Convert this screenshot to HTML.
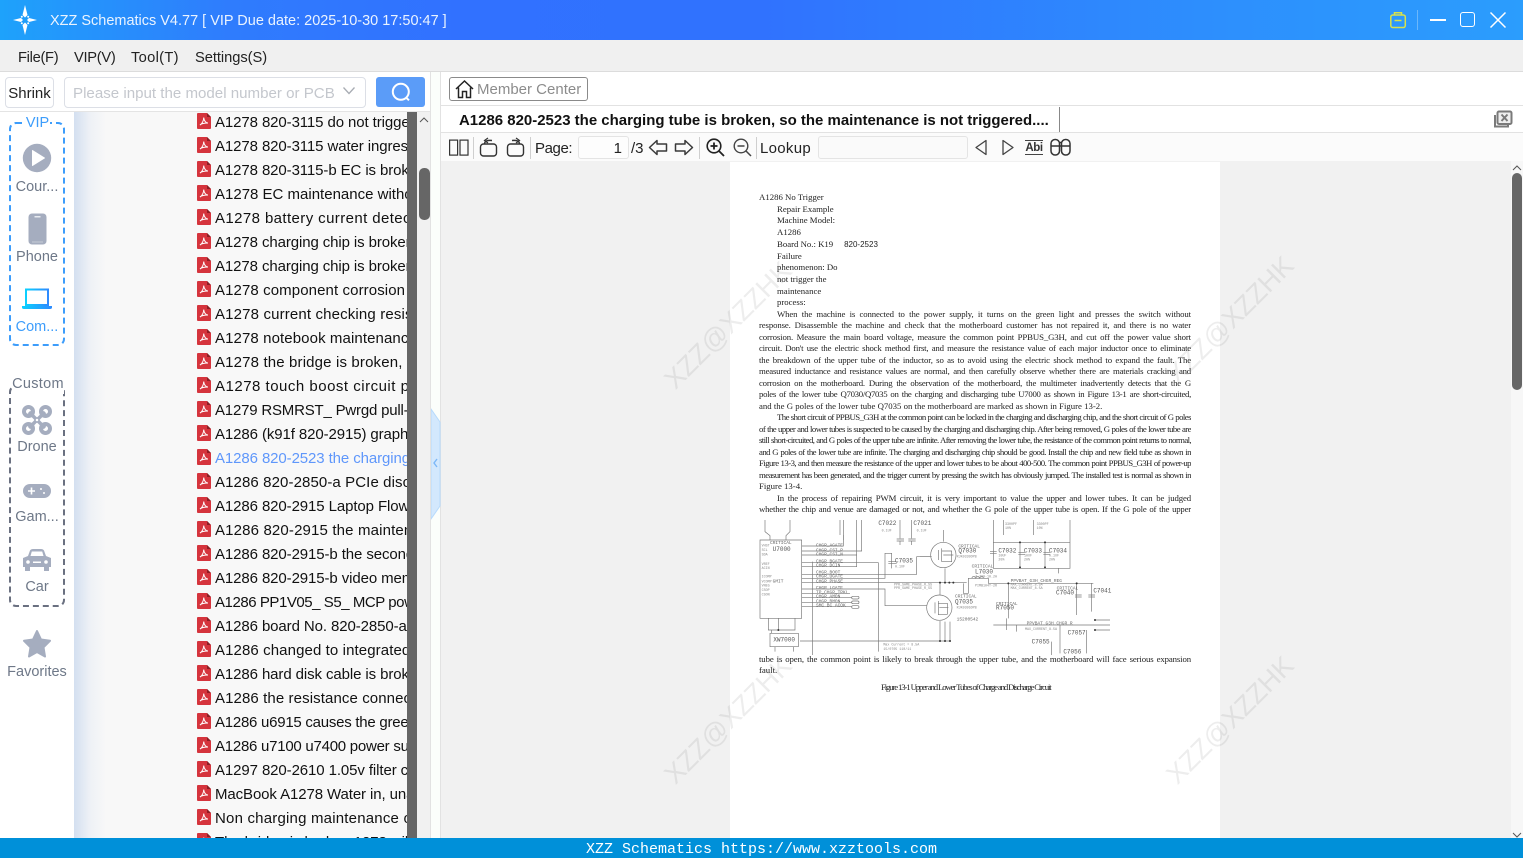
<!DOCTYPE html>
<html><head><meta charset="utf-8"><title>XZZ Schematics</title>
<style>
html,body{margin:0;padding:0;width:1523px;height:858px;overflow:hidden;background:#fff;font-family:"Liberation Sans","Noto Sans CJK SC",sans-serif;color:#111}
.a{position:absolute}
#top{left:0;top:0;width:1523px;height:40px;background:linear-gradient(90deg,#1ea2fb 0,#2f7cfd 15%,#3171ff 30%,#3072fe 50%,#2d8ffd 80%,#2b9dfd 100%)}
#menu{left:0;top:40px;width:1523px;height:31px;background:#f0f0f0;border-bottom:1px solid #dcdcdc}
.m{position:absolute;top:8px;font-size:14.7px;line-height:20px;color:#222}
#leftbg{left:74px;top:112px;width:333px;height:726px;background:linear-gradient(90deg,#d3dff0 0,#eef1f6 16px,#f8f8f8 32px)}
#list{left:74px;top:112px;width:333px;height:726px;overflow:hidden}
#list div{position:absolute;left:141px;width:192px;height:24px;line-height:24px;font-size:15px;letter-spacing:-.1px;white-space:nowrap;overflow:hidden;color:#111}
.pi{position:absolute;left:197px;width:14px;height:16px}
.lab{position:absolute;left:0;width:74px;text-align:center;font-size:14.5px;line-height:20px;color:#6e7888}
.p{position:absolute;left:759px;width:432px;height:12px;line-height:12px;font-family:"Liberation Serif",serif;font-size:8.75px;letter-spacing:-.12px;color:#222;text-align:justify;text-align-last:justify;overflow:hidden;white-space:nowrap;filter:blur(.25px)}
.i{left:777px;width:414px}
.l{text-align:left;text-align-last:left;letter-spacing:0}
.t{letter-spacing:-.55px}
.wm{position:absolute;font-size:27px;line-height:40px;width:190px;text-align:center;color:rgba(110,110,110,.12);transform:rotate(-45deg);white-space:nowrap}
.sep{position:absolute;top:137px;width:1px;height:22px;background:#cfcfcf}
.tx{position:absolute;font-size:15px;line-height:22px;color:#222;white-space:nowrap}
</style></head><body>
<svg width="0" height="0" style="position:absolute"><defs><symbol id="pdf" viewBox="0 0 14 16"><path d="M1 0H10L14 4V15Q14 16 13 16H1Q0 16 0 15V1Q0 0 1 0Z" fill="#d5343d"/><path d="M10 0L14 4H10Z" fill="#8c1f25"/><path d="M3 12C5 11 7 7 6.700 4.500C7 8 9 10 11 10C9 10 5 10 3 12Z" fill="none" stroke="#fff" stroke-width="1"/></symbol></defs></svg>

<div class="a" id="top"></div>
<svg class="a" style="left:11px;top:5px" width="28" height="30" viewBox="0 0 28 30"><path d="M14 0L16.500 10L14 12.500L11.500 10ZM14 30L16.500 20L14 17.500L11.500 20ZM2 15L10 13L12 15L10 17ZM26 15L18 13L16 15L18 17Z" fill="#fff"/><circle cx="10.800" cy="11.800" r="1" fill="#fff"/><circle cx="17.200" cy="11.800" r="1" fill="#fff"/><circle cx="10.800" cy="18.200" r="1" fill="#fff"/><circle cx="17.200" cy="18.200" r="1" fill="#fff"/></svg>
<div class="a" style="left:50px;top:11px;font-size:14.49px;line-height:20px;color:#eaf3ff;white-space:nowrap">XZZ Schematics V4.77 [ VIP Due date: 2025-10-30 17:50:47 ]</div>
<svg class="a" style="left:1388px;top:10px" width="20" height="20" viewBox="0 0 20 20" fill="none" stroke="#d7e24c" stroke-width="1.500"><rect x="2.800" y="5" width="14.500" height="12.500" rx="2"/><path d="M6.500 5V2.800H13.500V5M6.500 10.500H13.500"/></svg>
<div class="a" style="left:1417px;top:10px;width:1px;height:20px;background:#6bb7fb"></div>
<div class="a" style="left:1430px;top:19px;width:16px;height:2px;background:#fff"></div>
<div class="a" style="left:1460px;top:12px;width:13px;height:13px;border:1.500px solid #fff;border-radius:3px"></div>
<svg class="a" style="left:1489px;top:11px" width="18" height="18" viewBox="0 0 18 18"><path d="M1.500 1.500L16.500 16.500M16.500 1.500L1.500 16.500" stroke="#fff" stroke-width="1.500"/></svg>

<div class="a" id="menu">
<span class="m" style="left:18px;letter-spacing:-.3px">File(F)</span><span class="m" style="left:74px;letter-spacing:-.3px">VIP(V)</span><span class="m" style="left:131px;letter-spacing:.3px">Tool(T)</span><span class="m" style="left:195px;letter-spacing:-.05px">Settings(S)</span>
</div>

<!-- search row -->
<div class="a" style="left:0;top:72px;width:430px;height:39px;background:#fff;border-bottom:1px solid #e4e4e4"></div>
<div class="a" style="left:5px;top:77px;width:47px;height:29px;border:1px solid #dcdfe6;border-radius:4px;text-align:center;font-size:15px;line-height:31px;color:#222">Shrink</div>
<div class="a" style="left:64px;top:77px;width:300px;height:29px;border:1px solid #dcdfe6;border-radius:4px;font-size:15.1px;line-height:31px;color:#c4c7cd;text-indent:8px;white-space:nowrap;overflow:hidden">Please input the model number or PCB</div>
<svg class="a" style="left:342px;top:86px" width="14" height="10" viewBox="0 0 14 10"><path d="M1.500 1.500L7 7.500L12.500 1.500" fill="none" stroke="#a8acb3" stroke-width="1.300"/></svg>
<div class="a" style="left:376px;top:77px;width:49px;height:30px;background:#5b9cf8;border-radius:3px"></div>
<svg class="a" style="left:389px;top:80px" width="24" height="24" viewBox="0 0 24 24" fill="none" stroke="#fff" stroke-width="2"><circle cx="11.800" cy="11.800" r="8"/><path d="M17.500 18L20 20.300"/></svg>

<!-- left rail -->
<div class="a" style="left:0;top:112px;width:74px;height:726px;background:#fff"></div>
<div class="a" style="left:9px;top:122px;width:52px;height:220px;border:2px dashed #3d9dfb;border-radius:7px"></div>
<div class="a" style="left:25px;top:113px;width:25px;height:20px;background:#fff;text-align:center;font-size:14.5px;line-height:20px;color:#3d9dfb">VIP</div>
<svg class="a" style="left:22px;top:143px" width="30" height="30" viewBox="0 0 30 30"><circle cx="15" cy="15" r="14.200" fill="#a5adbf"/><path d="M10.500 7.500L22.500 15L10.500 22.500Z" fill="#fff" stroke="#fff" stroke-width="1" stroke-linejoin="round"/></svg>
<div class="lab" style="top:177px">Cour...</div>
<svg class="a" style="left:28px;top:213px" width="19" height="32" viewBox="0 0 19 32"><rect x=".500" y=".500" width="18" height="31" rx="3.500" fill="#a5adbf"/><rect x="6.500" y="3" width="6" height="1.500" fill="#e8ebf0"/><rect x="4" y="28.500" width="11" height="1" fill="#c8cdd7"/></svg>
<div class="lab" style="top:247px">Phone</div>
<svg class="a" style="left:22px;top:288px" width="30" height="22" viewBox="0 0 30 22"><defs><linearGradient id="lg" x1="0" x2="1"><stop offset="0" stop-color="#0bd0ff"/><stop offset="1" stop-color="#2e8bff"/></linearGradient></defs><path d="M4 1.500H26V17H4Z" fill="#fff" stroke="url(#lg)" stroke-width="2"/><path d="M0 18H30V19.500Q30 21 28 21H2Q0 21 0 19.500Z" fill="url(#lg)"/></svg>
<div class="lab" style="top:317px;color:#3d9dfb">Com...</div>

<div class="a" style="left:9px;top:385px;width:52px;height:218px;border:2px dashed #6a7080;border-radius:7px"></div>
<div class="a" style="left:12px;top:374px;width:52px;height:20px;background:#fff;text-align:center;font-size:14.5px;line-height:20px;letter-spacing:.3px;color:#6e7888">Custom</div>
<svg class="a" style="left:22px;top:405px" width="30" height="30" viewBox="0 0 30 30" fill="none" stroke="#a5adbf"><circle cx="6.500" cy="6.500" r="4.500" stroke-width="4"/><circle cx="23.500" cy="6.500" r="4.500" stroke-width="4"/><circle cx="6.500" cy="23.500" r="4.500" stroke-width="4"/><circle cx="23.500" cy="23.500" r="4.500" stroke-width="4"/><path d="M7 7L23 23M23 7L7 23" stroke-width="3.500"/><circle cx="15" cy="15" r="2" fill="#fff" stroke-width="1.500"/></svg>
<div class="lab" style="top:437px">Drone</div>
<svg class="a" style="left:23px;top:484px" width="28" height="14" viewBox="0 0 28 14"><rect width="28" height="14" rx="7" fill="#a5adbf"/><path d="M5 7H12M8.500 3.500V10.500" stroke="#fff" stroke-width="1.600"/><circle cx="18" cy="5" r="1" fill="#fff"/><circle cx="21" cy="9" r="1" fill="#fff"/></svg>
<div class="lab" style="top:507px">Gam...</div>
<svg class="a" style="left:23px;top:548px" width="28" height="24" viewBox="0 0 28 24"><path d="M5 8L7 2.500Q8 1 10 1H18Q20 1 21 2.500L23 8L28 10V19H26V23H21V19H7V23H2V19H0V10Z" fill="#a5adbf"/><path d="M7.500 8L8.800 3.500H19.200L20.500 8Z" fill="#fff"/><circle cx="5" cy="14" r="1.800" fill="#fff"/><circle cx="23" cy="14" r="1.800" fill="#fff"/><rect x="10" y="13.500" width="8" height="1.500" fill="#fff"/></svg>
<div class="lab" style="top:577px">Car</div>
<svg class="a" style="left:22px;top:629px" width="30" height="29" viewBox="0 0 30 29"><path d="M15 2L19 10.500L28 11.800L21.500 18.300L23 27.500L15 23L7 27.500L8.500 18.300L2 11.800L11 10.500Z" fill="#a5adbf" stroke="#a5adbf" stroke-width="2" stroke-linejoin="round"/></svg>
<div class="lab" style="top:662px;left:0">Favorites</div>

<!-- list -->
<div class="a" id="leftbg"></div>
<div class="a" id="list">
<div style="top:-1px">A1278 820-3115 do not trigger</div>
<div style="top:23px">A1278 820-3115 water ingress</div>
<div style="top:47px">A1278 820-3115-b EC is broken</div>
<div style="top:71px;letter-spacing:0">A1278 EC maintenance without</div>
<div style="top:95px;letter-spacing:.4px">A1278 battery current detection</div>
<div style="top:119px">A1278 charging chip is broken</div>
<div style="top:143px">A1278 charging chip is broken</div>
<div style="top:167px;letter-spacing:.1px">A1278 component corrosion</div>
<div style="top:191px;letter-spacing:.15px">A1278 current checking resistance</div>
<div style="top:215px;letter-spacing:.1px">A1278 notebook maintenance</div>
<div style="top:239px;letter-spacing:.15px">A1278 the bridge is broken, no</div>
<div style="top:263px;letter-spacing:.5px">A1278 touch boost circuit problem</div>
<div style="top:287px;letter-spacing:-.2px">A1279 RSMRST_ Pwrgd pull-up</div>
<div style="top:311px">A1286 (k91f 820-2915) graphics</div>
<div style="top:335px;color:#5f97fb">A1286 820-2523 the charging tube</div>
<div style="top:359px;letter-spacing:.1px">A1286 820-2850-a PCIe discrete</div>
<div style="top:383px">A1286 820-2915 Laptop Flowing</div>
<div style="top:407px;letter-spacing:.15px">A1286 820-2915 the maintenance</div>
<div style="top:431px">A1286 820-2915-b the second</div>
<div style="top:455px">A1286 820-2915-b video memory</div>
<div style="top:479px;letter-spacing:-.45px">A1286 PP1V05_ S5_ MCP power</div>
<div style="top:503px">A1286 board No. 820-2850-a</div>
<div style="top:527px;letter-spacing:.1px">A1286 changed to integrated</div>
<div style="top:551px">A1286 hard disk cable is broken</div>
<div style="top:575px;letter-spacing:.1px">A1286 the resistance connection</div>
<div style="top:599px;letter-spacing:-.25px">A1286 u6915 causes the green</div>
<div style="top:623px;letter-spacing:-.25px">A1286 u7100 u7400 power supply</div>
<div style="top:647px">A1297 820-2610 1.05v filter cap</div>
<div style="top:671px">MacBook A1278 Water in, unable</div>
<div style="top:695px;letter-spacing:.2px">Non charging maintenance of</div>
<div style="top:719px">The bridge is broken 1278 will</div>
<svg class="pi" style="left:123px;top:1px"><use href="#pdf"/></svg>
<svg class="pi" style="left:123px;top:25px"><use href="#pdf"/></svg>
<svg class="pi" style="left:123px;top:49px"><use href="#pdf"/></svg>
<svg class="pi" style="left:123px;top:73px"><use href="#pdf"/></svg>
<svg class="pi" style="left:123px;top:97px"><use href="#pdf"/></svg>
<svg class="pi" style="left:123px;top:121px"><use href="#pdf"/></svg>
<svg class="pi" style="left:123px;top:145px"><use href="#pdf"/></svg>
<svg class="pi" style="left:123px;top:169px"><use href="#pdf"/></svg>
<svg class="pi" style="left:123px;top:193px"><use href="#pdf"/></svg>
<svg class="pi" style="left:123px;top:217px"><use href="#pdf"/></svg>
<svg class="pi" style="left:123px;top:241px"><use href="#pdf"/></svg>
<svg class="pi" style="left:123px;top:265px"><use href="#pdf"/></svg>
<svg class="pi" style="left:123px;top:289px"><use href="#pdf"/></svg>
<svg class="pi" style="left:123px;top:313px"><use href="#pdf"/></svg>
<svg class="pi" style="left:123px;top:337px"><use href="#pdf"/></svg>
<svg class="pi" style="left:123px;top:361px"><use href="#pdf"/></svg>
<svg class="pi" style="left:123px;top:385px"><use href="#pdf"/></svg>
<svg class="pi" style="left:123px;top:409px"><use href="#pdf"/></svg>
<svg class="pi" style="left:123px;top:433px"><use href="#pdf"/></svg>
<svg class="pi" style="left:123px;top:457px"><use href="#pdf"/></svg>
<svg class="pi" style="left:123px;top:481px"><use href="#pdf"/></svg>
<svg class="pi" style="left:123px;top:505px"><use href="#pdf"/></svg>
<svg class="pi" style="left:123px;top:529px"><use href="#pdf"/></svg>
<svg class="pi" style="left:123px;top:553px"><use href="#pdf"/></svg>
<svg class="pi" style="left:123px;top:577px"><use href="#pdf"/></svg>
<svg class="pi" style="left:123px;top:601px"><use href="#pdf"/></svg>
<svg class="pi" style="left:123px;top:625px"><use href="#pdf"/></svg>
<svg class="pi" style="left:123px;top:649px"><use href="#pdf"/></svg>
<svg class="pi" style="left:123px;top:673px"><use href="#pdf"/></svg>
<svg class="pi" style="left:123px;top:697px"><use href="#pdf"/></svg>
<svg class="pi" style="left:123px;top:721px"><use href="#pdf"/></svg>
</div>
<!-- list scrollbars -->
<div class="a" style="left:407px;top:112px;width:10px;height:726px;background:#666"></div>
<div class="a" style="left:417px;top:112px;width:13px;height:726px;background:#f1f1f1"></div>
<svg class="a" style="left:419px;top:116px" width="10" height="8" viewBox="0 0 10 8"><path d="M1 6L5 2L9 6" fill="none" stroke="#555" stroke-width="1"/></svg>
<div class="a" style="left:419px;top:168px;width:11px;height:52px;background:#666;border-radius:5px"></div>
<!-- splitter -->
<div class="a" style="left:430px;top:72px;width:9px;height:766px;background:#fbfefb;border-left:1px solid #e2e2e2;border-right:1px solid #e2e2e2"></div>
<svg class="a" style="left:431px;top:408px" width="10" height="112" viewBox="0 0 10 112"><path d="M0 1L9 14V98L0 111Z" fill="#d3e8fd" stroke="#b7dafc" stroke-width="1"/><path d="M6 51L3 55L6 59" fill="none" stroke="#7cb8f8" stroke-width="1.400"/></svg>

<!-- right top -->
<div class="a" style="left:441px;top:72px;width:1082px;height:33px;background:#fff;border-bottom:1px solid #e2e2e2"></div>
<div class="a" style="left:449px;top:77px;width:137px;height:22px;border:1px solid #8a8a8a;border-radius:3px"></div>
<svg class="a" style="left:455px;top:79px" width="19" height="20" viewBox="0 0 19 20" fill="none" stroke="#222" stroke-width="1.500"><path d="M1 10L9.500 2L18 10M3.500 8.500V18.500H7.500V12.500H11.500V18.500H15.500V8.500"/></svg>
<div class="tx" style="left:477px;top:79px;color:#8c8c8c">Member Center</div>
<div class="a" style="left:441px;top:106px;width:1082px;height:26px;background:#fff;border-bottom:1px solid #e2e2e2"></div>
<div class="a" style="left:459px;top:111px;font-size:14.97px;line-height:20px;font-weight:bold;color:#111;white-space:nowrap">A1286 820-2523 the charging tube is broken, so the maintenance is not triggered....</div>
<div class="a" style="left:1059px;top:107px;width:1px;height:25px;background:#888"></div>
<svg class="a" style="left:1493px;top:110px" width="20" height="18" viewBox="0 0 20 18" fill="none" stroke="#7a7a7a" stroke-width="2"><path d="M2 5V16.500H15V14"/><rect x="4.500" y="1.500" width="14" height="12.500" rx="1.500" fill="#eee"/><path d="M8.500 4.500L14.500 11M14.500 4.500L8.500 11"/></svg>

<!-- toolbar -->
<div class="a" style="left:441px;top:133px;width:1082px;height:28px;background:#fbfbfb"></div>
<svg class="a" style="left:449px;top:139px" width="20" height="17" viewBox="0 0 20 17" fill="none" stroke="#333" stroke-width="1.200"><rect x=".600" y="1.100" width="8" height="15"/><rect x="11" y="1.100" width="8" height="15"/></svg>
<div class="sep" style="left:473px"></div>
<svg class="a" style="left:479px;top:137px" width="20" height="20" viewBox="0 0 20 20" fill="none" stroke="#333" stroke-width="1.400"><rect x="1.500" y="7" width="16" height="12" rx="3"/><path d="M5.500 7C5.500 4 8.500 3 13 3.500"/><path d="M9 1L5.500 3.500L9 6" stroke-width="1.200"/></svg>
<svg class="a" style="left:505px;top:137px" width="20" height="20" viewBox="0 0 20 20" fill="none" stroke="#333" stroke-width="1.400"><rect x="2.500" y="7" width="16" height="12" rx="3"/><path d="M14.500 7C14.500 4 11.500 3 7 3.500"/><path d="M11 1L14.500 3.500L11 6" stroke-width="1.200"/></svg>
<div class="sep" style="left:530px"></div>
<div class="tx" style="left:535px;top:138px;letter-spacing:-.4px">Page:</div>
<div class="a" style="left:578px;top:136px;width:49px;height:21px;border:1px solid #e4e4e4;border-radius:3px;background:#fdfdfd;font-size:15px;line-height:23px;text-align:right;color:#222"><span style="padding-right:6px">1</span></div>
<div class="tx" style="left:631px;top:138px">/3</div>
<svg class="a" style="left:648px;top:138px" width="20" height="19" viewBox="0 0 20 19"><path d="M1.500 9.500L9 2.500V6H18.500V13H9V16.500Z" fill="none" stroke="#3a3a3a" stroke-width="1.500" stroke-linejoin="round"/></svg>
<svg class="a" style="left:674px;top:138px" width="20" height="19" viewBox="0 0 20 19"><path d="M18.500 9.500L11 2.500V6H1.500V13H11V16.500Z" fill="none" stroke="#3a3a3a" stroke-width="1.500" stroke-linejoin="round"/></svg>
<div class="sep" style="left:699px"></div>
<svg class="a" style="left:706px;top:138px" width="19" height="19" viewBox="0 0 19 19" fill="none" stroke="#222" stroke-width="1.600"><circle cx="8" cy="8" r="6.800"/><path d="M13 13L18 18M4.500 8H11.500M8 4.500V11.500" stroke-width="1.800"/></svg>
<svg class="a" style="left:733px;top:138px" width="19" height="19" viewBox="0 0 19 19" fill="none" stroke="#444" stroke-width="1.400"><circle cx="8" cy="8" r="6.800"/><path d="M13 13L18 18M4.500 8H11.500" stroke-width="1.500"/></svg>
<div class="sep" style="left:756px"></div>
<div class="tx" style="left:760px;top:138px;letter-spacing:.3px">Lookup</div>
<div class="a" style="left:818px;top:136px;width:148px;height:21px;border:1px solid #e4e4e4;border-radius:3px;background:#fafafa"></div>
<svg class="a" style="left:974px;top:139px" width="14" height="17" viewBox="0 0 14 17"><path d="M2 8.500L12 1.500V15.500Z" fill="none" stroke="#444" stroke-width="1.300" stroke-linejoin="round"/></svg>
<svg class="a" style="left:1001px;top:139px" width="14" height="17" viewBox="0 0 14 17"><path d="M12 8.500L2 1.500V15.500Z" fill="none" stroke="#444" stroke-width="1.300" stroke-linejoin="round"/></svg>
<div class="a" style="left:1025px;top:140px;width:18px;height:13px;border-top:1px solid #444;border-bottom:1px solid #444;font-size:11.5px;line-height:14px;font-weight:bold;color:#333;text-align:center;letter-spacing:-.4px">Abi</div>
<svg class="a" style="left:1050px;top:138px" width="21" height="18" viewBox="0 0 21 18" fill="none" stroke="#333" stroke-width="1.500"><rect x="1" y="1.500" width="8.500" height="15.500" rx="4"/><rect x="11.500" y="1.500" width="8.500" height="15.500" rx="4"/><path d="M1 8H20M9.500 4.500H11.500"/></svg>

<!-- doc area -->
<div class="a" style="left:441px;top:161px;width:1070px;height:677px;background:#f1f1f1"></div>
<div class="a" style="left:730px;top:162px;width:490px;height:676px;background:#fff"></div>
<div class="a" style="left:1511px;top:161px;width:12px;height:677px;background:#f7f7f7"></div>
<svg class="a" style="left:1512px;top:164px" width="10" height="8" viewBox="0 0 10 8"><path d="M1 6L5 2L9 6" fill="none" stroke="#555" stroke-width="1"/></svg>
<svg class="a" style="left:1512px;top:832px" width="10" height="6" viewBox="0 0 10 6"><path d="M1 1L5 5L9 1" fill="none" stroke="#555" stroke-width="1"/></svg>
<div class="a" style="left:1512px;top:173px;width:10px;height:217px;background:#666;border-radius:5px"></div>

<!-- pdf text -->
<div class="p l" style="top:191px">A1286 No Trigger</div>
<div class="p i l" style="top:203px">Repair Example</div>
<div class="p i l" style="top:214px">Machine Model:</div>
<div class="p i l" style="top:226px">A1286</div>
<div class="p i l" style="top:238px;white-space:pre">Board No.: K19     <span style="font-family:'Liberation Sans',sans-serif;font-size:8px">820-2523</span></div>
<div class="p i l" style="top:250px">Failure</div>
<div class="p i l" style="top:261px">phenomenon: Do</div>
<div class="p i l" style="top:273px">not trigger the</div>
<div class="p i l" style="top:285px">maintenance</div>
<div class="p i l" style="top:296px">process:</div>
<div class="p i" style="top:308px">When the machine is connected to the power supply, it turns on the green light and presses the switch without</div>
<div class="p" style="top:319px">response. Disassemble the machine and check that the motherboard customer has not repaired it, and there is no water</div>
<div class="p" style="top:331px">corrosion. Measure the main board voltage, measure the common point PPBUS_G3H, and cut off the power value short</div>
<div class="p" style="top:342px;letter-spacing:-.2px">circuit. Don't use the electric shock method first, and measure the resistance value of each major inductor once to eliminate</div>
<div class="p" style="top:354px">the breakdown of the upper tube of the inductor, so as to avoid using the electric shock method to expand the fault. The</div>
<div class="p" style="top:365px;letter-spacing:-.2px">measured inductance and resistance values are normal, and then carefully observe whether there are materials cracking and</div>
<div class="p" style="top:377px;letter-spacing:-.2px">corrosion on the motherboard. During the observation of the motherboard, the multimeter inadvertently detects that the G</div>
<div class="p" style="top:388px;letter-spacing:-.3px">poles of the lower tube Q7030/Q7035 on the charging and discharging tube U7000 as shown in Figure 13-1 are short-circuited,</div>
<div class="p l" style="top:400px">and the G poles of the lower tube Q7035 on the motherboard are marked as shown in Figure 13-2.</div>
<div class="p i t" style="top:411px">The short circuit of PPBUS_G3H at the common point can be locked in the charging and discharging chip, and the short circuit of G poles</div>
<div class="p t" style="top:423px">of the upper and lower tubes is suspected to be caused by the charging and discharging chip. After being removed, G poles of the lower tube are</div>
<div class="p t" style="top:434px;letter-spacing:-.62px">still short-circuited, and G poles of the upper tube are infinite. After removing the lower tube, the resistance of the common point returns to normal,</div>
<div class="p t" style="top:446px">and G poles of the lower tube are infinite. The charging and discharging chip should be good. Install the chip and new field tube as shown in</div>
<div class="p t" style="top:457px">Figure 13-3, and then measure the resistance of the upper and lower tubes to be about 400-500. The common point PPBUS_G3H of power-up</div>
<div class="p t" style="top:469px">measurement has been generated, and the trigger current by pressing the switch has obviously jumped. The installed test is normal as shown in</div>
<div class="p l" style="top:480px">Figure 13-4.</div>
<div class="p i" style="top:492px">In the process of repairing PWM circuit, it is very important to value the upper and lower tubes. It can be judged</div>
<div class="p" style="top:503px;letter-spacing:-.2px">whether the chip and venue are damaged or not, and whether the G pole of the upper tube is open. If the G pole of the upper</div>
<div class="p" style="top:653px">tube is open, the common point is likely to break through the upper tube, and the motherboard will face serious expansion</div>
<div class="p l" style="top:664px">fault.</div>
<div class="p l" style="top:681px;left:881px;width:180px;letter-spacing:-1.14px">Figure 13-1 Upper and Lower Tubes of Charge and Discharge Circuit</div>

<!-- schematic -->
<svg class="a" style="left:750px;top:515px;filter:blur(.25px)" width="370" height="140" viewBox="0 0 1110 420" font-family="Liberation Mono, monospace">
<g fill="none" stroke="#777" stroke-width="2">
<path d="M30 75H155V310H30ZM45 15V50L60 62V75M120 15V50L108 62V75M55 310V345H135V310M85 310V345M60 355H145V395H60ZM75 395V410M130 395V410"/>
<path d="M155 93H280V15M155 108H335V15M155 120H320V15M155 143H385V410M155 155H320V100M155 178H500V125H540M155 190H405V115H425V160M155 203H650M155 222H405V272H530M155 235H300M155 248H305M155 262H305M155 275H305M65 345V355M188 140V420M150 378H600"/>
<circle cx="580" cy="120" r="38"/><circle cx="568" cy="278" r="38"/>
<path d="M565 105V135M575 100V140M580 120H610M575 108H605V140H575M555 262V295M565 258V300M568 278H595M565 265H592V298H565M580 80V45M585 160V205M570 240V205M570 318V378M585 320V378M600 320V378M510 125H545"/>
<path d="M450 15V70M440 72H462M440 78H462M450 78V90M485 15V70M475 72H497M475 78H497M485 78V90M270 15V60M280 60V75M415 140H440M415 146H440M730 15V160H960V15M730 82H960M810 82V160M885 82V160M775 205H1030M980 205V300M1025 205V290M730 330H1080M770 310V345M800 330V350M930 330V415M1035 315H1080M1035 345H1080M1010 345V415M905 380V420M975 240H995M975 246H995M1015 240H1035M1015 246H1035M925 160V175M720 110H740M720 116H740M805 112H825M805 118H825M880 112H900M880 118H900M760 15V60M850 15V60"/>
<path d="M640 205V235H655V190H715V205H775V310M665 190q6 -12 12 0q6 -12 12 0q6 -12 12 0"/>
<rect x="305" y="244" width="22" height="8" rx="4"/><rect x="305" y="258" width="22" height="8" rx="4"/><rect x="305" y="272" width="22" height="8" rx="4"/>
</g>
<g fill="#555" font-size="18">
<text x="385" y="30">C7022</text><text x="490" y="30">C7021</text><text x="745" y="112">C7032</text><text x="822" y="112">C7033</text><text x="897" y="112">C7034</text><text x="435" y="143">C7035</text>
<text x="675" y="175">L7030</text><text x="625" y="112">Q7030</text><text x="615" y="265">Q7035</text>
<text x="68" y="108">U7000</text><text x="70" y="380">XW7000</text><text x="918" y="238">C7040</text><text x="1030" y="233">C7041</text><text x="738" y="283">R7050</text><text x="953" y="358">C7057</text><text x="845" y="385">C7055</text><text x="940" y="415">C7056</text>
</g>
<g fill="#666" font-size="13.500">
<text x="198" y="95">CHGR_AGATE</text><text x="198" y="110">CHGR_CSI_P</text><text x="198" y="122">CHGR_CSI_N</text><text x="198" y="142">CHGR_BGATE</text><text x="198" y="155">CHGR_DCIN</text><text x="198" y="176">CHGR_BOOT</text><text x="198" y="188">CHGR_UGATE</text><text x="198" y="202">CHGR_PHASE</text><text x="198" y="222">CHGR_LGATE</text><text x="198" y="235">TP_CHGR_TRKL</text><text x="198" y="248">CHGR_AMON</text><text x="198" y="262">CHGR_BMON</text><text x="198" y="275">SMC_BC_ACOK</text><text x="782" y="201">PPVBAT_G3H_CHGR_REG</text><text x="830" y="328">PPVBAT_G3H_CHGR_R</text><text x="68" y="203">GMIT</text><text x="625" y="97">CRITICAL</text><text x="615" y="248">CRITICAL</text><text x="665" y="157">CRITICAL</text><text x="920" y="223">CRITICAL</text><text x="738" y="270">CRITICAL</text><text x="620" y="317">15200542</text><text x="60" y="87">CRITICAL</text>
</g>
<g fill="#888" font-size="10">
<text x="35" y="95">VHST</text><text x="35" y="108">SCL</text><text x="35" y="122">SDA</text><text x="35" y="150">VREF</text><text x="35" y="162">ACIN</text><text x="35" y="188">ICOMP</text><text x="35" y="202">VCOMP</text><text x="35" y="215">VNEG</text><text x="35" y="228">CSOP</text><text x="35" y="242">CSON</text>
<text x="432" y="212">PPR_SAME_PHASE_R_SS</text><text x="432" y="222">PPR_SAME_PHASE_R_SS</text><text x="782" y="212">MAX_CURRENT_8.5A</text><text x="782" y="222">MAX_CURRENT_8.5A</text><text x="825" y="345">MAX_CURRENT_8.5A</text>
<text x="620" y="128">RJK0330DPB</text><text x="620" y="280">RJK0305DPB</text><text x="675" y="214">PIMB104T-2R</text><text x="400" y="391">Max Current = 8.5A</text><text x="400" y="405">15/0705 110/11</text><text x="395" y="50">0.1UF</text><text x="500" y="50">0.1UF</text><text x="765" y="30">3300PF</text><text x="860" y="30">3300PF</text><text x="765" y="42">10%</text><text x="860" y="42">10%</text><text x="745" y="125">10UF</text><text x="822" y="125">10UF</text><text x="897" y="125">0.1UF</text><text x="745" y="137">20%</text><text x="822" y="137">20%</text><text x="897" y="137">20%</text><text x="435" y="158">0.1UF</text><text x="675" y="188">4.7UH-10.2A</text>
</g>
<g fill="#333"><circle cx="570" cy="203" r="3"/><circle cx="585" cy="203" r="3"/><circle cx="598" cy="203" r="3"/><circle cx="610" cy="203" r="3"/><circle cx="570" cy="378" r="3"/><circle cx="585" cy="378" r="3"/><circle cx="600" cy="378" r="3"/><circle cx="775" cy="205" r="3"/><circle cx="980" cy="205" r="3"/><circle cx="810" cy="82" r="3"/><circle cx="885" cy="82" r="3"/><circle cx="810" cy="157" r="3"/><circle cx="885" cy="157" r="3"/><circle cx="1035" cy="315" r="3"/><circle cx="1035" cy="345" r="3"/><circle cx="85" cy="345" r="3"/></g>
</svg>

<!-- watermarks -->
<div class="wm" style="left:633px;top:305px">XZZ@XZZHK</div>
<div class="wm" style="left:1135px;top:300px">XZZ@XZZHK</div>
<div class="wm" style="left:633px;top:700px">XZZ@XZZHK</div>
<div class="wm" style="left:1135px;top:700px">XZZ@XZZHK</div>

<!-- bottom bar -->
<div class="a" style="left:0;top:838px;width:1523px;height:20px;background:#0090d9"></div>
<div class="a" style="left:586px;top:840px;font-family:'Liberation Mono',monospace;font-size:15px;line-height:20px;color:#fff;white-space:nowrap">XZZ Schematics https://www.xzztools.com</div>
</body></html>
